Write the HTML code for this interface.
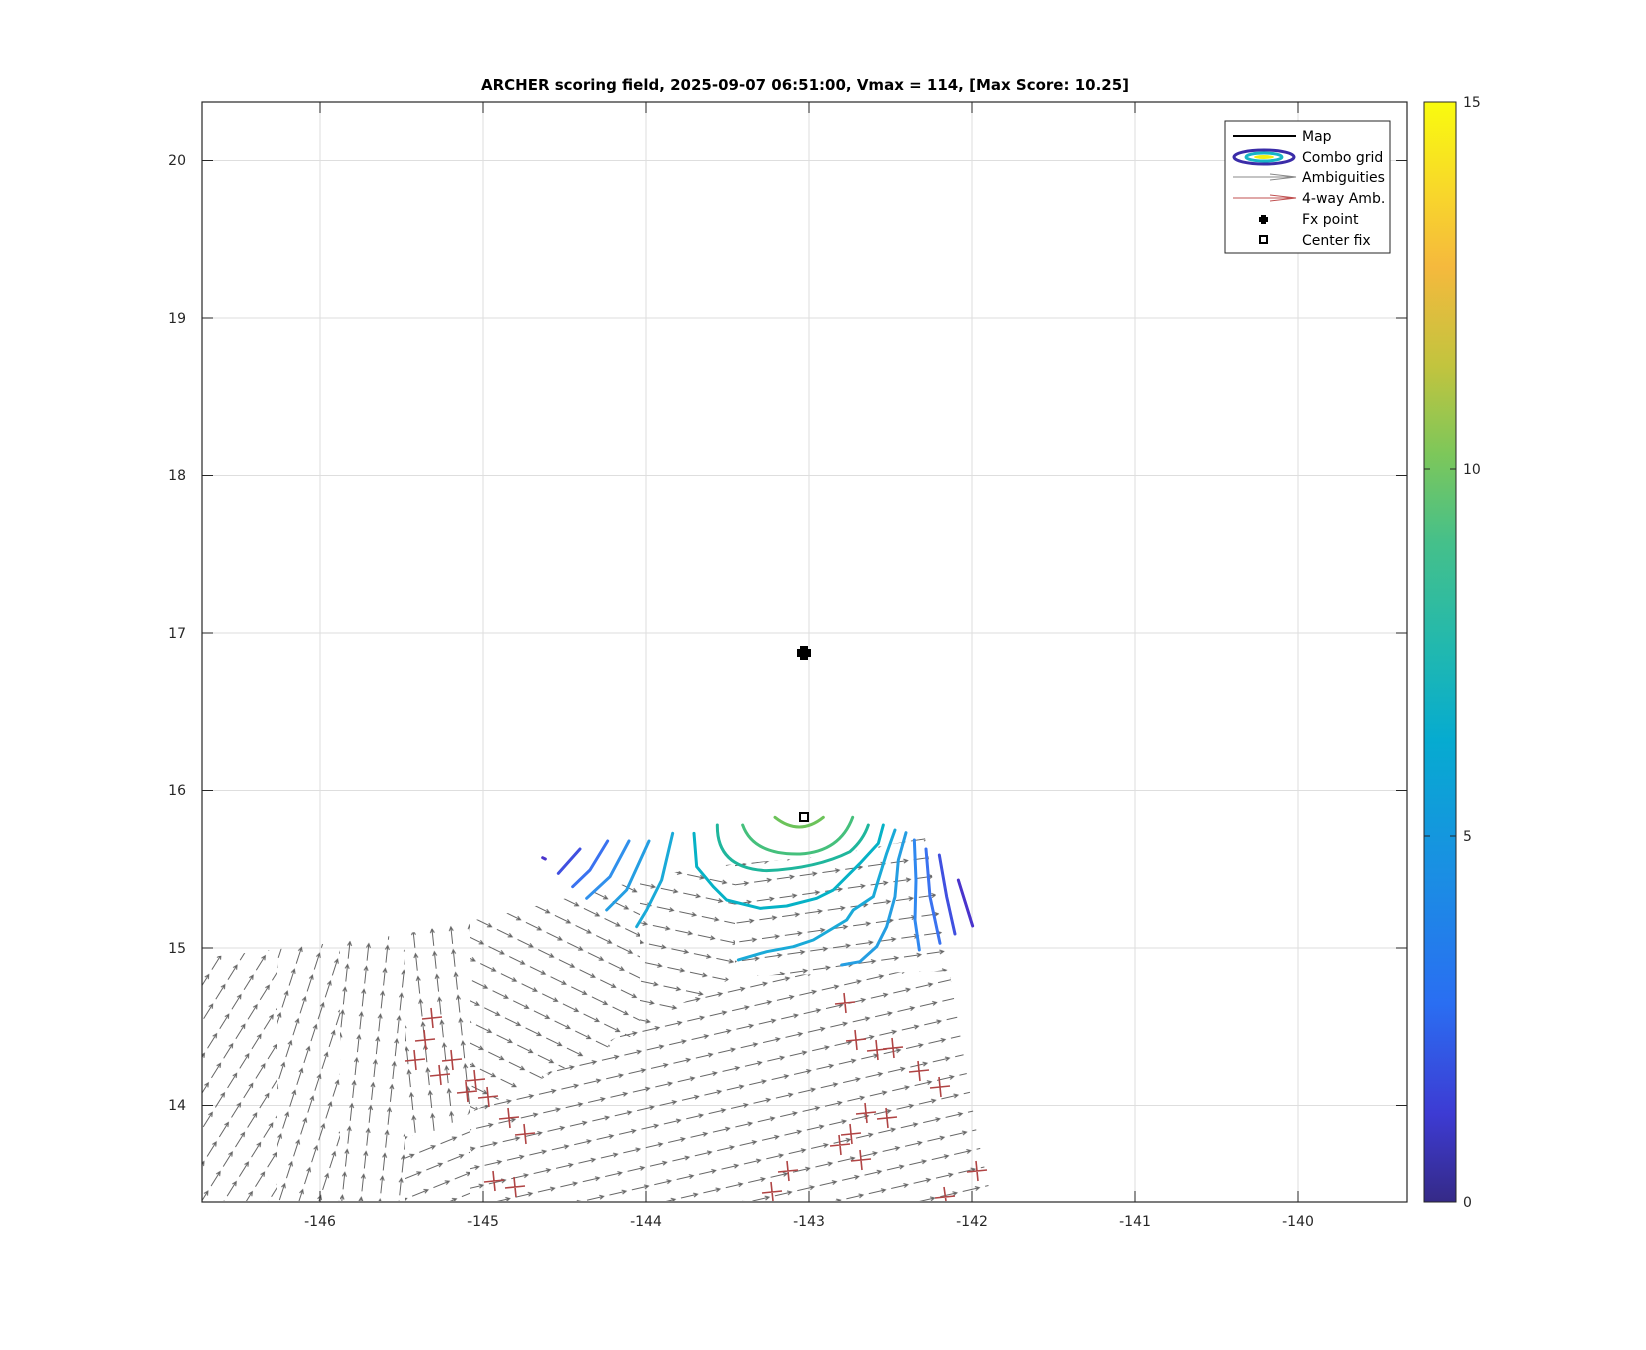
<!DOCTYPE html>
<html><head><meta charset="utf-8"><style>
html,body{margin:0;padding:0;background:#fff;}
svg{display:block;font-family:"DejaVu Sans","Liberation Sans",sans-serif;}
</style></head><body>
<svg width="1646" height="1350" viewBox="0 0 1646 1350" xmlns="http://www.w3.org/2000/svg">
<defs>
<linearGradient id="parula" x1="0" y1="1" x2="0" y2="0">
<stop offset="0" stop-color="#352a87"/><stop offset="0.08" stop-color="#3d3bd3"/><stop offset="0.18" stop-color="#2a6ef2"/><stop offset="0.3" stop-color="#1a8fe3"/><stop offset="0.42" stop-color="#06abd0"/><stop offset="0.5" stop-color="#20b8b0"/><stop offset="0.6" stop-color="#45c08a"/><stop offset="0.68" stop-color="#7dc75a"/><stop offset="0.76" stop-color="#c2c43e"/><stop offset="0.85" stop-color="#f5b93d"/><stop offset="0.92" stop-color="#f8d82a"/><stop offset="1" stop-color="#f9fb0e"/>
</linearGradient>
<g id="arw"><path d="M3,9.5 L20,9.5 M16,7.5 L20,9.5 L16,11.5" stroke="#666" stroke-width="1.1" fill="none"/></g>
<pattern id="pA" width="23" height="19" patternUnits="userSpaceOnUse" patternTransform="rotate(-58)"><use href="#arw"/></pattern>
<pattern id="pA2" width="23" height="19" patternUnits="userSpaceOnUse" patternTransform="rotate(-72)"><use href="#arw"/></pattern>
<pattern id="pB" width="23" height="19" patternUnits="userSpaceOnUse" patternTransform="rotate(-84)"><use href="#arw"/></pattern>
<pattern id="pB2" width="23" height="19" patternUnits="userSpaceOnUse" patternTransform="rotate(-96)"><use href="#arw"/></pattern>
<pattern id="pC" width="23" height="19" patternUnits="userSpaceOnUse" patternTransform="rotate(26)"><use href="#arw"/></pattern>
<pattern id="pC2" width="23" height="19" patternUnits="userSpaceOnUse" patternTransform="rotate(12)"><use href="#arw"/></pattern>
<pattern id="pD" width="23" height="19" patternUnits="userSpaceOnUse" patternTransform="rotate(-8)"><use href="#arw"/></pattern>
<pattern id="pE" width="23" height="19" patternUnits="userSpaceOnUse" patternTransform="rotate(-13)"><use href="#arw"/></pattern>
<pattern id="pE2" width="23" height="19" patternUnits="userSpaceOnUse" patternTransform="rotate(-22)"><use href="#arw"/></pattern>
<clipPath id="reg"><polygon points="202,958 400,935 500,915 587,893 693,868 833,855 925,838 945,945 977,1134 992,1201 202,1201"/></clipPath>
</defs>
<rect width="1646" height="1350" fill="#fff"/>
<g stroke="#dedede" stroke-width="1">
<line x1="320" y1="102" x2="320" y2="1202"/><line x1="483" y1="102" x2="483" y2="1202"/><line x1="646" y1="102" x2="646" y2="1202"/><line x1="809" y1="102" x2="809" y2="1202"/><line x1="972" y1="102" x2="972" y2="1202"/><line x1="1135" y1="102" x2="1135" y2="1202"/><line x1="1298" y1="102" x2="1298" y2="1202"/>
<line x1="202" y1="160.5" x2="1407" y2="160.5"/><line x1="202" y1="318" x2="1407" y2="318"/><line x1="202" y1="475.5" x2="1407" y2="475.5"/><line x1="202" y1="633" x2="1407" y2="633"/><line x1="202" y1="790.5" x2="1407" y2="790.5"/><line x1="202" y1="948" x2="1407" y2="948"/><line x1="202" y1="1105.5" x2="1407" y2="1105.5"/>
</g>
<g clip-path="url(#reg)">
<rect x="202" y="900" width="75" height="302" fill="url(#pA)"/>
<rect x="277" y="900" width="63" height="302" fill="url(#pA2)"/>
<rect x="340" y="900" width="65" height="302" fill="url(#pB)"/>
<polygon points="405,900 470,900 470,1113 430,1135 405,1135" fill="url(#pB2)"/>
<polygon points="405,1135 430,1135 470,1113 470,1202 405,1202" fill="url(#pE2)"/>
<polygon points="470,860 640,845 640,1032 470,1113" fill="url(#pC)"/>
<polygon points="640,845 735,840 735,976 640,1032" fill="url(#pC2)"/>
<polygon points="735,820 1000,820 1000,970 735,976" fill="url(#pD)"/>
<polygon points="470,1113 735,976 1000,970 1000,1202 470,1202" fill="url(#pE)"/>
</g>
<path stroke="#b04444" stroke-width="1.6" fill="none" d="M415,1041L435,1039M424,1030L426,1050 M405,1061L425,1059M414,1050L416,1070 M442,1061L462,1059M451,1050L453,1070 M457,1093L477,1091M466,1082L468,1102 M478,1098L498,1096M487,1087L489,1107 M499,1119L519,1117M508,1108L510,1128 M515,1135L535,1133M524,1124L526,1144 M430,1076L450,1074M439,1065L441,1085 M484,1182L504,1180M493,1171L495,1191 M505,1188L525,1186M514,1177L516,1197 M835,1004L855,1002M844,993L846,1013 M846,1041L866,1039M855,1030L857,1050 M867,1051L887,1049M876,1040L878,1060 M883,1049L903,1047M892,1038L894,1058 M909,1072L929,1070M918,1061L920,1081 M930,1088L950,1086M939,1077L941,1097 M856,1114L876,1112M865,1103L867,1123 M841,1135L861,1133M850,1124L852,1144 M830,1146L850,1144M839,1135L841,1155 M851,1161L871,1159M860,1150L862,1170 M877,1119L897,1117M886,1108L888,1128 M778,1172L798,1170M787,1161L789,1181 M762,1193L782,1191M771,1182L773,1201 M967,1172L987,1170M976,1161L978,1181 M935,1198L955,1196M944,1187L946,1201 M422,1019L442,1017M431,1008L433,1028 M465,1081L485,1079M474,1070L476,1090"/>
<g transform="translate(500,780) scale(0.33333)" fill="none" stroke-width="9" stroke-linecap="round" stroke-linejoin="round">
<path d="M825,112 Q898,170 970,112" stroke="#6cc35a"/>
<path d="M728,135 Q760,225 900,222 Q1020,215 1058,112" stroke="#45c07c"/>
<path d="M652,135 Q650,265 800,272 Q950,265 1050,215 Q1090,180 1105,135" stroke="#1fb69c"/>
<path d="M582,160 L590,260 L640,320 L680,360 L780,385 L860,378 L950,355 L1000,330 L1080,250 L1135,190 L1150,135" stroke="#06b2c6"/>
<path d="M518,160 L485,300 L470,330 L440,390 L410,440" stroke="#1aaad8"/>
<path d="M1185,150 L1160,220 L1135,300 L1120,350 L1060,390 L1040,420 L940,480 L880,500 L800,515 L715,540" stroke="#1aaad8"/>
<path d="M447,183 L380,330 L320,390" stroke="#259ee2"/>
<path d="M1218,158 L1195,240 L1185,350 L1160,440 L1130,500 L1080,545 L1025,555" stroke="#259ee2"/>
<path d="M387,183 L330,290 L260,355" stroke="#3090ec"/>
<path d="M1243,180 L1248,300 L1245,420 L1258,510" stroke="#3088f0"/>
<path d="M323,183 L270,270 L218,320" stroke="#3a72f0"/>
<path d="M1278,207 L1290,350 L1320,490" stroke="#3a72f0"/>
<path d="M240,207 L175,280" stroke="#4050e0"/>
<path d="M1318,225 L1340,350 L1365,462" stroke="#4050e0"/>
<path d="M128,233 L136,237" stroke="#4a34cc"/>
<path d="M1375,300 L1418,438" stroke="#4a34cc"/>
</g>
<path d="M800,646h8v3h3v8h-3v3h-8v-3h-3v-8h3z" fill="#000"/>
<rect x="800" y="813" width="8" height="8" fill="none" stroke="#000" stroke-width="2"/>
<rect x="202" y="102" width="1205" height="1100" fill="none" stroke="#262626" stroke-width="1.2"/>
<g stroke="#262626" stroke-width="1">
<line x1="320" y1="1202" x2="320" y2="1191"/><line x1="483" y1="1202" x2="483" y2="1191"/><line x1="646" y1="1202" x2="646" y2="1191"/><line x1="809" y1="1202" x2="809" y2="1191"/><line x1="972" y1="1202" x2="972" y2="1191"/><line x1="1135" y1="1202" x2="1135" y2="1191"/><line x1="1298" y1="1202" x2="1298" y2="1191"/>
<line x1="320" y1="102" x2="320" y2="113"/><line x1="483" y1="102" x2="483" y2="113"/><line x1="646" y1="102" x2="646" y2="113"/><line x1="809" y1="102" x2="809" y2="113"/><line x1="972" y1="102" x2="972" y2="113"/><line x1="1135" y1="102" x2="1135" y2="113"/><line x1="1298" y1="102" x2="1298" y2="113"/>
<line x1="202" y1="160.5" x2="213" y2="160.5"/><line x1="202" y1="318" x2="213" y2="318"/><line x1="202" y1="475.5" x2="213" y2="475.5"/><line x1="202" y1="633" x2="213" y2="633"/><line x1="202" y1="790.5" x2="213" y2="790.5"/><line x1="202" y1="948" x2="213" y2="948"/><line x1="202" y1="1105.5" x2="213" y2="1105.5"/>
<line x1="1407" y1="160.5" x2="1396" y2="160.5"/><line x1="1407" y1="318" x2="1396" y2="318"/><line x1="1407" y1="475.5" x2="1396" y2="475.5"/><line x1="1407" y1="633" x2="1396" y2="633"/><line x1="1407" y1="790.5" x2="1396" y2="790.5"/><line x1="1407" y1="948" x2="1396" y2="948"/><line x1="1407" y1="1105.5" x2="1396" y2="1105.5"/>
</g>
<g font-size="14" fill="#262626" text-anchor="end">
<text x="186" y="165">20</text><text x="186" y="323">19</text><text x="186" y="480">18</text><text x="186" y="638">17</text><text x="186" y="795">16</text><text x="186" y="953">15</text><text x="186" y="1110">14</text>
</g>
<g font-size="14" fill="#262626" text-anchor="middle">
<text x="320" y="1226">-146</text><text x="483" y="1226">-145</text><text x="646" y="1226">-144</text><text x="809" y="1226">-143</text><text x="972" y="1226">-142</text><text x="1135" y="1226">-141</text><text x="1298" y="1226">-140</text>
</g>
<text x="805" y="90" font-size="15" font-weight="bold" text-anchor="middle" fill="#000">ARCHER scoring field, 2025-09-07 06:51:00, Vmax = 114, [Max Score: 10.25]</text>
<rect x="1424" y="102" width="32" height="1100" fill="url(#parula)" stroke="#262626" stroke-width="1"/>
<g stroke="#262626"><line x1="1456" y1="469" x2="1450" y2="469"/><line x1="1456" y1="836" x2="1450" y2="836"/><line x1="1424" y1="469" x2="1430" y2="469"/><line x1="1424" y1="836" x2="1430" y2="836"/></g>
<g font-size="14" fill="#262626"><text x="1463" y="107">15</text><text x="1463" y="474">10</text><text x="1463" y="841">5</text><text x="1463" y="1207">0</text></g>
<rect x="1225" y="121" width="165" height="132" fill="#fff" stroke="#262626" stroke-width="1"/>
<g font-size="14" fill="#000">
<text x="1302" y="141">Map</text><text x="1302" y="162">Combo grid</text><text x="1302" y="182">Ambiguities</text><text x="1302" y="203">4-way Amb.</text><text x="1302" y="224">Fx point</text><text x="1302" y="245">Center fix</text>
</g>
<line x1="1233" y1="136" x2="1296" y2="136" stroke="#000" stroke-width="2"/>
<ellipse cx="1264" cy="157" rx="30" ry="7" fill="#fff" stroke="#3a2ca8" stroke-width="3"/>
<ellipse cx="1264" cy="157" rx="18" ry="4" fill="#fff" stroke="#17b5c6" stroke-width="3"/>
<ellipse cx="1264" cy="157" rx="10" ry="2" fill="#f0f010"/>
<g stroke="#888" stroke-width="1" fill="none"><line x1="1233" y1="177" x2="1296" y2="177"/><path d="M1270,174 L1296,177 L1270,180"/></g>
<g stroke="#c05050" stroke-width="1" fill="none"><line x1="1233" y1="198" x2="1296" y2="198"/><path d="M1270,195 L1296,198 L1270,201"/></g>
<path d="M1261,215h5v2h2v5h-2v2h-5v-2h-2v-5h2z" fill="#000"/>
<rect x="1260" y="236" width="7" height="7" fill="none" stroke="#000" stroke-width="2"/>
</svg>
</body></html>
